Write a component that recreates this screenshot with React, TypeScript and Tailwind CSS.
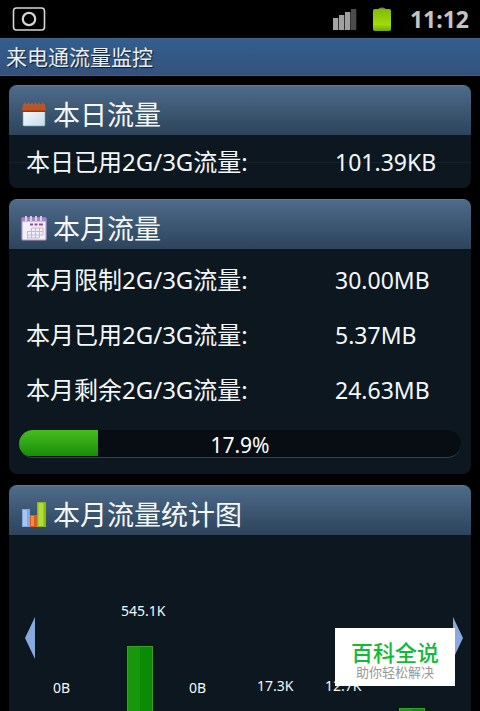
import React from 'react';

const monthRows = [
  { label: '本月限制2G/3G流量:', value: '30.00MB' },
  { label: '本月已用2G/3G流量:', value: '5.37MB' },
  { label: '本月剩余2G/3G流量:', value: '24.63MB' },
];

const usedPercent = 17.9;

const chartDays = [
  { label: '0B', height: 0 },
  { label: '545.1K', height: 77 },
  { label: '0B', height: 0 },
  { label: '17.3K', height: 2 },
  { label: '12.7K', height: 2 },
  { label: '', height: 15 },
];

const DayIcon = () => (
  <svg width="26" height="26" viewBox="0 0 26 26" aria-hidden="true">
    <defs>
      <linearGradient id="dayPaper" x1="0" y1="0" x2="1" y2="1">
        <stop offset="0" stopColor="#fafdff" />
        <stop offset="1" stopColor="#c3dbea" />
      </linearGradient>
    </defs>
    <rect x="2" y="6" width="22" height="18" rx="1" fill="url(#dayPaper)" stroke="#8299ab" strokeWidth="0.6" />
    <path d="M2 2h22l1 8H1z" fill="#c4501c" />
    <path d="M1 8.500h24V10H1z" fill="#94390f" />
    <path d="M4 0.500v4M7.500 0.500v4M11 0.500v4M14.500 0.500v4M18 0.500v4M21.500 0.500v4" stroke="#8d6a5c" strokeWidth="1.4" />
  </svg>
);

const MonthIcon = () => (
  <svg width="26" height="26" viewBox="0 0 26 26" aria-hidden="true">
    <rect x="1" y="2" width="24" height="22" rx="1" fill="#f3eef8" stroke="#b69ad2" strokeWidth="1.2" />
    <path d="M1 1.500h24v4H1z" fill="#a884cb" />
    <path d="M5 0v5M10 0v5M15 0v5M20 0v5" stroke="#e3d2f1" strokeWidth="1.8" />
    <path d="M9 8.500h3M13.500 8.500h3M18 8.500h4" stroke="#8a4f9b" strokeWidth="2" />
    <path
      d="M11 12h11M6 15.500h16M6 19h16M6 22h12M6.500 15.500V22M10.500 12v10M14.500 12v10M18.500 12v10M22 12v7"
      stroke="#c4bccb"
      strokeWidth="1"
      fill="none"
    />
  </svg>
);

const ChartIcon = () => (
  <svg width="26" height="26" viewBox="0 0 26 26" aria-hidden="true">
    <path d="M1 7h8v18H1z" fill="#83a9e4" />
    <path d="M2 8h4v16H2z" fill="#a8c5f2" />
    <path d="M9 13h7v12H9z" fill="#d65d20" />
    <path d="M10 14h3v10h-3z" fill="#ee8a4a" />
    <path d="M16 0h9v25h-9z" fill="#88b916" />
    <path d="M17.500 1h5v23h-5z" fill="#b3dc39" />
  </svg>
);

const Card: React.FC<{ icon: React.ReactNode; title: string; children: React.ReactNode }> = ({ icon, title, children }) => (
  <section className="shrink-0 rounded-lg overflow-hidden bg-[#0d171f]">
    <header className="flex items-center gap-1.5 h-[50px] pl-3 pt-2 border-t border-[#66788d] bg-linear-to-b from-[#4f6b8b] to-[#2c445b]">
      {icon}
      <h2 className="text-[27px] leading-8">{title}</h2>
    </header>
    {children}
  </section>
);

const UsageRow: React.FC<{ label: string; value: string }> = ({ label, value }) => (
  <div className="relative flex items-center h-[53px] pl-[17px] leading-8">
    <dt className="w-[309px] text-[24px]">{label}</dt>
    <dd className="text-[23px]">{value}</dd>
  </div>
);

export default function App() {
  return (
    <div className="relative h-screen flex flex-col overflow-hidden bg-black text-[#f4f8fa] font-['Noto_Sans','Noto_Sans_CJK_SC',sans-serif]">
      <div className="shrink-0 flex items-center h-[38px] pl-3 pr-[11px]">
        <svg width="34" height="24" viewBox="0 0 34 24" fill="none" stroke="#d6d6d6" aria-hidden="true">
          <rect x="1.500" y="1" width="31" height="22" rx="3" strokeWidth="1.600" />
          <circle cx="17" cy="12" r="6.200" strokeWidth="2.200" />
        </svg>
        <svg className="ml-auto" width="24" height="22" viewBox="0 0 24 22" aria-hidden="true">
          <path d="M0 10h5.300v12H0z" fill="#a5a5a5" />
          <path d="M6 7h5.300v15H6z" fill="#a0a0a0" />
          <path d="M12 4h5.300v18H12z" fill="#a0a0a0" />
          <path d="M18 1h5.300v21H18z" fill="#4c4c4c" />
        </svg>
        <svg className="ml-4" width="18" height="24" viewBox="0 0 18 24" aria-hidden="true">
          <defs>
            <linearGradient id="battery" x1="0" y1="0" x2="0" y2="1">
              <stop offset="0" stopColor="#7dbc05" />
              <stop offset="0.700" stopColor="#a5d90c" />
              <stop offset="1" stopColor="#70a903" />
            </linearGradient>
          </defs>
          <path d="M5.500 3V1.500Q9 -0.500 12.500 1.500V3z" fill="#6d8a3c" />
          <rect x="0" y="2" width="18" height="22" rx="1.800" fill="url(#battery)" />
        </svg>
        <time className="ml-[19px] text-[23px] leading-8 font-bold text-[#c4c4c4]">11:12</time>
      </div>

      <div className="shrink-0 flex items-center h-[38px] px-1.5 border-y border-t-[#3f648c] border-b-[#4a5b7c] bg-linear-to-b from-[#335e8e] to-[#33527d]">
        <h1 className="text-[21px] leading-8 text-[#e9eef4] [text-shadow:1px_1px_1px_#111c2c]">来电通流量监控</h1>
      </div>

      <main className="flex flex-col gap-[11px] px-[9px] pt-[9px]">
        <Card icon={<DayIcon />} title="本日流量">
          <dl className="relative">
            <div className="absolute inset-x-0 top-1/2 h-px bg-[#16232b]" />
            <UsageRow label="本日已用2G/3G流量:" value="101.39KB" />
          </dl>
        </Card>

        <Card icon={<MonthIcon />} title="本月流量">
          <dl className="flex flex-col gap-[2px] pt-1">
            {monthRows.map(row => (
              <UsageRow key={row.label} label={row.label} value={row.value} />
            ))}
          </dl>
          <div
            role="progressbar"
            aria-valuenow={usedPercent}
            className="relative h-[28px] mx-2.5 mt-3.5 mb-4 rounded-full overflow-hidden bg-[#070d13] border-b border-[#35404a]"
          >
            <div
              className="h-[26px] bg-linear-to-b from-[#45bd20] to-[#128f08]"
              style={{ width: `${usedPercent}%` }}
            />
            <span className="absolute inset-0 text-center text-[21px] leading-[30px] text-white">{usedPercent}%</span>
          </div>
        </Card>

        <Card icon={<ChartIcon />} title="本月流量统计图">
          <div className="flex h-[188px] pl-4 pr-2">
            <button aria-label="上一页" className="self-start mt-[82px]">
              <svg width="10" height="42" viewBox="0 0 10 42" aria-hidden="true">
                <path d="M10 0v42L0 21z" fill="#88a9dc" />
              </svg>
            </button>
            <ul className="flex-1 flex items-end justify-between ml-[18px] mr-2.5">
              {chartDays.map((day, i) => (
                <li key={i} className="w-[50px]">
                  <div className="mb-[25px] h-5 text-[14px] leading-5">{day.label}</div>
                  <div
                    className="w-[26px] ml-1.5 bg-linear-to-r from-[#16970c] from-50% to-[#0a8a05] to-50% shadow-[inset_0_0_0_1px_#3c9a34,0_0_3px_1px_#03200a]"
                    style={{ height: day.height }}
                  />
                </li>
              ))}
            </ul>
            <button aria-label="下一页" className="self-start mt-[82px]">
              <svg width="10" height="42" viewBox="0 0 10 42" aria-hidden="true">
                <path d="M0 0v42l10-21z" fill="#88a9dc" />
              </svg>
            </button>
          </div>
        </Card>
      </main>

      <aside className="absolute right-[25px] bottom-[25px] w-[120px] h-[58px] pt-2 bg-white text-center">
        <div className="text-[22px] leading-[30px] font-medium text-[#12bb37] font-['Noto_Sans_CJK_SC',sans-serif]">百科全说</div>
        <div className="text-[13px] leading-3 text-[#989898]">助你轻松解决</div>
      </aside>
    </div>
  );
}
